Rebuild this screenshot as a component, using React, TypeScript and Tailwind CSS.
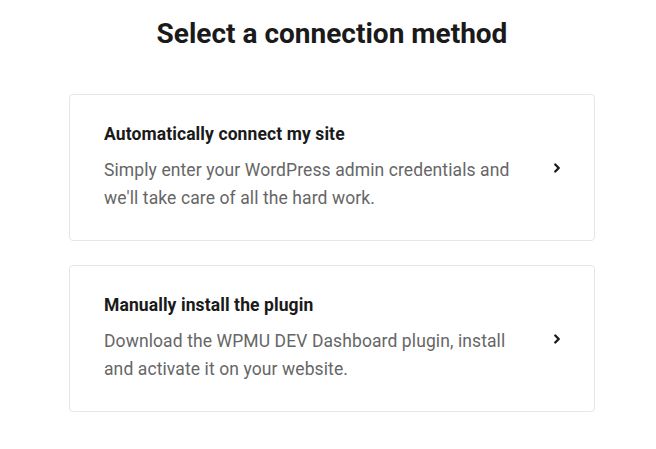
import { FiChevronRight } from 'react-icons/fi'

interface Method {
  title: string
  description: string
}

const methods: Method[] = [
  {
    title: 'Automatically connect my site',
    description: "Simply enter your WordPress admin credentials and we'll take care of all the hard work."
  },
  {
    title: 'Manually install the plugin',
    description: 'Download the WPMU DEV Dashboard plugin, install and activate it on your website.'
  }
]

function App() {
  return (
    <div className="min-h-screen bg-white font-['Roboto',sans-serif] pl-2">
      <div className="w-[526px] mx-auto pt-[18px]">
        {/* Header */}
        <h1 className="text-center text-[28px] leading-8 font-bold text-[#1a1a1a] mb-[44px]">
          Select a connection method
        </h1>

        {/* Options */}
        <div className="flex flex-col gap-6">
          {methods.map((method) => (
            <button
              key={method.title}
              className="w-full flex items-center text-left bg-white border border-[#e6e6e6] rounded pl-[34px] pr-[30px] pt-[28px] pb-[28px]"
            >
              <div className="flex-1">
                <div className="text-[17.5px] leading-[22px] font-bold tracking-[0.1px] text-[#1a1a1a] mb-[11px]">
                  {method.title}
                </div>
                <p className="text-[17.5px] leading-7 tracking-[0.1px] text-[#666] max-w-[420px]">
                  {method.description}
                </p>
              </div>
              <FiChevronRight className="text-[#1a1a1a] text-[14px] stroke-[4]" />
            </button>
          ))}
        </div>
      </div>
    </div>
  )
}

export default App
